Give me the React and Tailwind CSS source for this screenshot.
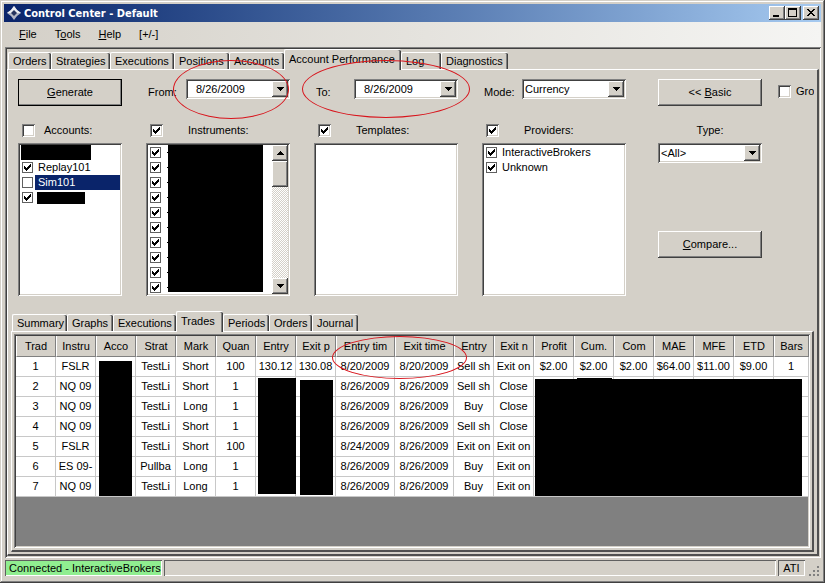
import { useState } from "react";
import clsx from "clsx";

const raised =
  "bg-[#d4d0c8] shadow-[inset_-1px_-1px_0_#404040,inset_1px_1px_0_#fff,inset_-2px_-2px_0_#808080]";
const sunken =
  "shadow-[inset_1px_1px_0_#808080,inset_-1px_-1px_0_#fff,inset_2px_2px_0_#404040,inset_-2px_-2px_0_#d4d0c8]";

const mainTabs = [
  { name: "Orders", width: "w-[43px]" },
  { name: "Strategies", width: "w-[59px]" },
  { name: "Executions", width: "w-16" },
  { name: "Positions", width: "w-[55px]" },
  { name: "Accounts", width: "w-[55px]" },
  { name: "Account Performance", width: "w-[117px]" },
  { name: "Log", width: "w-10" },
  { name: "Diagnostics", width: "w-[67px]" },
];

const reportTabs = [
  { name: "Summary", width: "w-[55px]" },
  { name: "Graphs", width: "w-[46px]" },
  { name: "Executions", width: "w-[63px]" },
  { name: "Trades", width: "w-[47px]" },
  { name: "Periods", width: "w-[46px]" },
  { name: "Orders", width: "w-[43px]" },
  { name: "Journal", width: "w-[46px]" },
];

const columns = [
  "Trad", "Instru", "Acco", "Strat", "Mark", "Quan", "Entry", "Exit p", "Entry tim", "Exit time",
  "Entry", "Exit n", "Profit", "Cum.", "Com", "MAE", "MFE", "ETD", "Bars",
];

const trades = [
  ["1", "FSLR", "", "TestLi", "Short", "100", "130.12", "130.08", "8/20/2009", "8/20/2009", "Sell sh", "Exit on", "$2.00", "$2.00", "$2.00", "$64.00", "$11.00", "$9.00", "1"],
  ["2", "NQ 09", "", "TestLi", "Short", "1", "", "", "8/26/2009", "8/26/2009", "Sell sh", "Close"],
  ["3", "NQ 09", "", "TestLi", "Long", "1", "", "", "8/26/2009", "8/26/2009", "Buy", "Close"],
  ["4", "NQ 09", "", "TestLi", "Short", "1", "", "", "8/26/2009", "8/26/2009", "Sell sh", "Close"],
  ["5", "FSLR", "", "TestLi", "Short", "100", "", "", "8/24/2009", "8/26/2009", "Exit on", "Exit on"],
  ["6", "ES 09-", "", "Pullba", "Long", "1", "", "", "8/26/2009", "8/26/2009", "Buy", "Exit on"],
  ["7", "NQ 09", "", "TestLi", "Long", "1", "", "", "8/26/2009", "8/26/2009", "Buy", "Exit on"],
];

function Arrow({ up }) {
  return (
    <svg width="7" height="4" viewBox="0 0 7 4" shapeRendering="crispEdges" aria-hidden="true">
      <path d={up ? "M3 0h1v1h1v1h1v1h1v1H0V3h1V2h1V1h1z" : "M0 0h7v1H6v1H5v1H4v1H3V3H2V2H1V1H0z"} />
    </svg>
  );
}

function CheckBox({ id, label, checked, flat }) {
  return (
    <span className={clsx("relative block shrink-0", flat ? "size-[11px]" : "size-[13px]")}>
      <input
        id={id}
        type="checkbox"
        aria-label={label}
        defaultChecked={checked}
        className={clsx("peer block size-full appearance-none bg-white", flat ? "border border-[#606060]" : sunken)}
      />
      <svg
        viewBox="0 0 7 7"
        shapeRendering="crispEdges"
        aria-hidden="true"
        className={clsx("pointer-events-none absolute hidden size-[7px] peer-checked:block", flat ? "left-[2px] top-[2px]" : "left-[3px] top-[3px]")}
      >
        <path d="M0 2h1v1h1v1h1V3h1V2h1V1h1V0h1v3H6v1H5v1H4v1H3v1H2V6H1V5H0z" />
      </svg>
    </span>
  );
}

function PushButton({ children, isDefault, className }) {
  return (
    <button className={clsx("h-[27px] w-full shrink-0", raised, isDefault && "outline -outline-offset-1 outline-black", className)}>
      {children}
    </button>
  );
}

function DropArrow() {
  return (
    <span className={clsx("pointer-events-none absolute right-[2px] top-[2px] flex h-4 w-4 items-center justify-center", raised)}>
      <Arrow />
    </span>
  );
}

function DateBox({ id, label, value }) {
  return (
    <div className="flex h-[27px] items-center justify-between">
      <label htmlFor={id} className="pl-[2px]">{label}</label>
      <div className="relative w-[104px] self-start">
        <input id={id} defaultValue={value} className={clsx("block h-5 w-full bg-white pl-[10px] pr-5", sunken)} />
        <DropArrow />
      </div>
    </div>
  );
}

function SelectBox({ id, label, options }) {
  return (
    <div className="relative w-[104px] self-start">
      <select id={id} aria-label={label} className={clsx("block h-5 w-full appearance-none bg-white pl-[3px] pr-5", sunken)}>
        {options.map((o) => (
          <option key={o}>{o}</option>
        ))}
      </select>
      <DropArrow />
    </div>
  );
}

function ListHeader({ id, label, checked, narrow }) {
  return (
    <div className={clsx("flex h-[37px] items-center pl-1 pt-3", narrow ? "gap-[9px]" : "gap-[25px]")}>
      <CheckBox id={id} checked={checked} />
      <label htmlFor={id}>{label}</label>
    </div>
  );
}

function ListItem({ id, label, checked, selected, children }) {
  return (
    <li className="flex h-[15px] items-center pl-[2px]">
      <CheckBox id={id} label={label ? undefined : "Item"} checked={checked} flat />
      {label && (
        <label htmlFor={id} className={clsx("ml-[2px] flex-1 pl-[3px] leading-[15px]", selected && "bg-[#0a246a] text-white")}>
          {label}
        </label>
      )}
      {children}
    </li>
  );
}

function Tabs({ tabs, active, onSelect }) {
  return (
    <div role="tablist" className="flex h-5 items-end pl-px">
      {tabs.map((tab) => {
        const on = tab.name === active;
        return (
          <button
            key={tab.name}
            role="tab"
            aria-selected={on}
            onClick={() => onSelect(tab.name)}
            className={clsx(
              "shrink-0 whitespace-nowrap rounded-t-[2px] border-l border-t border-white bg-[#d4d0c8] pl-1 text-left shadow-[inset_-1px_0_0_#404040,inset_-2px_0_0_#808080]",
              tab.width,
              on ? "relative -mb-px h-[21px] pb-[2px]" : "h-[17px]"
            )}
          >
            {tab.name}
          </button>
        );
      })}
    </div>
  );
}

function Ellipse({ className }) {
  return <div className={clsx("pointer-events-none absolute z-10 rounded-[50%] border border-[#d8141c]", className)} />;
}

function TitleBar() {
  return (
    <header className="flex h-[18px] items-center bg-linear-to-r from-[#0a246a] to-[#a6caf0] pl-[3px] pr-[2px] text-white">
      <svg width="14" height="14" viewBox="0 0 14 14" aria-hidden="true">
        <path d="M7 0l3 4 4 3-4 3-3 4-3-4-4-3 4-3z" fill="#b4b8c6" />
        <path d="M7 0l3 4 4 3H0l4-3z" fill="#eceef2" />
        <path d="M7 4l3 3-3 3-3-3z" fill="#26345f" />
      </svg>
      <h1 className="flex-1 pl-[3px] font-['DejaVu_Sans_Condensed','DejaVu_Sans',sans-serif] text-[11px] font-bold">
        Control Center - Default
      </h1>
      <div className="flex text-black">
        <button aria-label="Minimize" className={clsx("h-[14px] w-4", raised)}>
          <svg width="16" height="14" shapeRendering="crispEdges"><path d="M4 9h6v2H4z" /></svg>
        </button>
        <button aria-label="Maximize" className={clsx("h-[14px] w-4", raised)}>
          <svg width="16" height="14" shapeRendering="crispEdges"><path fillRule="evenodd" d="M3 2h9v9H3zM4 4v6h7V4z" /></svg>
        </button>
        <button aria-label="Close" className={clsx("ml-[2px] h-[14px] w-4", raised)}>
          <svg width="16" height="14" shapeRendering="crispEdges">
            <path d="M4 3h2v1h1v1h2V4h1V3h2v1h-1v1h-1v1H9v1h1v1h1v1h1v1h-2V9H9V8H7v1H6v1H4V9h1V8h1V7h1V6H6V5H5V4H4z" />
          </svg>
        </button>
      </div>
    </header>
  );
}

function Filters() {
  return (
    <section className="relative flex gap-6 overflow-hidden pl-[7px] pt-[9px]">
      <div className="flex w-[104px] shrink-0 flex-col">
        <PushButton isDefault><u>G</u>enerate</PushButton>
        <ListHeader id="accounts" label="Accounts:" narrow />
        <ul className={clsx("h-[153px] bg-white p-[2px]", sunken)}>
          <li className="ml-px h-[15px] w-[70px] bg-black" />
          <ListItem id="replay" label="Replay101" checked />
          <ListItem id="sim" label="Sim101" selected />
          <ListItem id="hidden-account" checked>
            <span className="ml-1 h-3 w-12 bg-black" />
          </ListItem>
        </ul>
      </div>

      <div className="flex w-36 shrink-0 flex-col">
        <DateBox id="from" label="From:" value="8/26/2009" />
        <ListHeader id="instruments" label="Instruments:" checked />
        <div className={clsx("flex h-[153px] bg-white p-[2px]", sunken)}>
          <ul className="w-5">
            {Array.from({ length: 10 }, (_, i) => (
              <ListItem key={i} id={`instrument-${i}`} checked>
                <span className="ml-[6px] h-px w-px shrink-0 bg-black" />
              </ListItem>
            ))}
          </ul>
          <div className="h-[147px] w-[95px] bg-black" />
          <div className="ml-auto flex w-4 flex-col bg-[repeating-conic-gradient(#fff_0_25%,#d4d0c8_0_50%)] bg-[length:2px_2px]">
            <button aria-label="Scroll up" className={clsx("flex h-4 items-center justify-center", raised)}><Arrow up /></button>
            <div className={clsx("h-[26px]", raised)} />
            <button aria-label="Scroll down" className={clsx("mt-auto flex h-4 items-center justify-center", raised)}><Arrow /></button>
          </div>
        </div>
      </div>

      <div className="flex w-36 shrink-0 flex-col">
        <DateBox id="to" label="To:" value="8/26/2009" />
        <ListHeader id="templates" label="Templates:" checked />
        <ul className={clsx("h-[153px] bg-white", sunken)} />
      </div>

      <div className="flex w-36 shrink-0 flex-col">
        <div className="flex h-[27px] items-center justify-between">
          <label htmlFor="mode" className="pl-[2px]">Mode:</label>
          <SelectBox id="mode" options={["Currency", "Percent", "Points"]} />
        </div>
        <ListHeader id="providers" label="Providers:" checked />
        <ul className={clsx("h-[153px] bg-white p-[2px]", sunken)}>
          <ListItem id="ib" label="InteractiveBrokers" checked />
          <ListItem id="unknown" label="Unknown" checked />
        </ul>
      </div>

      <div className="ml-2 flex w-[104px] shrink-0 flex-col">
        <PushButton>&lt;&lt; <u>B</u>asic</PushButton>
        <label htmlFor="type" className="flex h-[37px] items-center justify-center pt-3">Type:</label>
        <SelectBox id="type" options={["<All>"]} />
        <PushButton className="mt-[68px]"><u>C</u>ompare...</PushButton>
      </div>

      <div className="-ml-2 flex h-6 shrink-0 items-center gap-[5px]">
        <CheckBox id="group" />
        <label htmlFor="group">Gro</label>
      </div>
    </section>
  );
}

function TradesGrid() {
  return (
    <div className={clsx("relative flex-1 bg-[#808080] p-[2px]", sunken)}>
      <table className="w-full table-fixed border-separate border-spacing-0 text-center">
        <colgroup>
          {columns.map((c, i) => (
            <col key={i} className={i === 8 || i === 9 ? "w-[59px]" : i === 18 ? "w-[35px]" : "w-10"} />
          ))}
        </colgroup>
        <thead>
          <tr className="h-[21px]">
            {columns.map((c, i) => (
              <th key={i} className="overflow-hidden whitespace-nowrap border-b border-l border-r border-b-[#808080] border-l-white border-r-[#808080] bg-[#d4d0c8] p-0 font-normal">
                {c}
              </th>
            ))}
          </tr>
        </thead>
        <tbody>
          {trades.map((row) => (
            <tr key={row[0]} className="h-5">
              {columns.map((_, i) => (
                <td key={i} className="overflow-hidden whitespace-nowrap border-b border-r border-[#c8c8c8] bg-white p-0">
                  {row[i]}
                </td>
              ))}
            </tr>
          ))}
        </tbody>
      </table>
      {/* blacked-out account, price and profit cells */}
      <div className="absolute left-[85px] top-[27px] h-[135px] w-[33px] bg-black" />
      <div className="absolute left-[244px] top-11 h-[116px] w-[38px] bg-black" />
      <div className="absolute left-[286px] top-[46px] h-[115px] w-[33px] bg-black" />
      <div className="absolute left-[521px] top-[45px] h-[117px] w-[267px] bg-black" />
      <div className="absolute left-[563px] top-11 h-px w-[35px] bg-black" />
      <Ellipse className="left-[318px] top-[2px] h-[43px] w-[135px]" />
    </div>
  );
}

function StatusBar() {
  const cell = "flex h-4 items-center shadow-[inset_1px_1px_0_#606060,inset_-1px_-1px_0_#fff]";
  return (
    <footer className="flex h-[22px] items-start gap-[2px] pl-px pt-[2px]">
      <span className={clsx("w-[157px] whitespace-nowrap bg-[#90ee90] pl-1", cell)}>Connected - InteractiveBrokers</span>
      <span className={clsx("flex-1", cell)} />
      <span className={clsx("w-[27px] justify-center", cell)}>ATI</span>
      <svg width="13" height="16" className="ml-px" shapeRendering="crispEdges" aria-hidden="true">
        <path d="M9 6h2v2H9zM5 10h2v2H5zM9 10h2v2H9zM1 14h2v2H1zM5 14h2v2H5zM9 14h2v2H9z" fill="#808080" />
      </svg>
    </footer>
  );
}

export default function App() {
  const [mainTab, setMainTab] = useState("Account Performance");
  const [reportTab, setReportTab] = useState("Trades");

  return (
    <div className="flex min-h-screen flex-col bg-[#d4d0c8] px-1 pb-[3px] pt-1 font-['Liberation_Sans',Arial,sans-serif] text-[11px] leading-[13px] text-black shadow-[inset_-1px_-1px_0_#404040,inset_1px_1px_0_#d4d0c8,inset_-2px_-2px_0_#808080,inset_2px_2px_0_#fff]">
      <TitleBar />
      <nav className="flex h-[25px] items-center gap-[18px] bg-linear-to-r from-[#d4d0c8] to-[#f5f5f3] pl-[15px]">
        <button><u>F</u>ile</button>
        <button>T<u>o</u>ols</button>
        <button><u>H</u>elp</button>
        <button>[+/-]</button>
      </nav>

      <main className={clsx("relative ml-px flex flex-1 flex-col p-[2px]", sunken)}>
        <Tabs tabs={mainTabs} active={mainTab} onSelect={setMainTab} />
        <div className="flex flex-1 flex-col border-b-2 border-l border-r-2 border-t border-b-[#505050] border-l-white border-r-[#505050] border-t-white pb-[2px] pl-[3px] pr-[3px]">
          <Filters />
          <div className="mt-[15px] flex flex-1 flex-col">
            <Tabs tabs={reportTabs} active={reportTab} onSelect={setReportTab} />
            <div className="flex flex-1 flex-col border-b-2 border-l border-r-2 border-t border-b-[#505050] border-l-white border-r-[#505050] border-t-white p-[2px]">
              <TradesGrid />
            </div>
          </div>
        </div>
        <Ellipse className="left-[168px] top-[13px] h-[59px] w-[116px]" />
        <Ellipse className="left-[297px] top-[13px] h-[58px] w-[168px]" />
      </main>

      <StatusBar />
    </div>
  );
}
